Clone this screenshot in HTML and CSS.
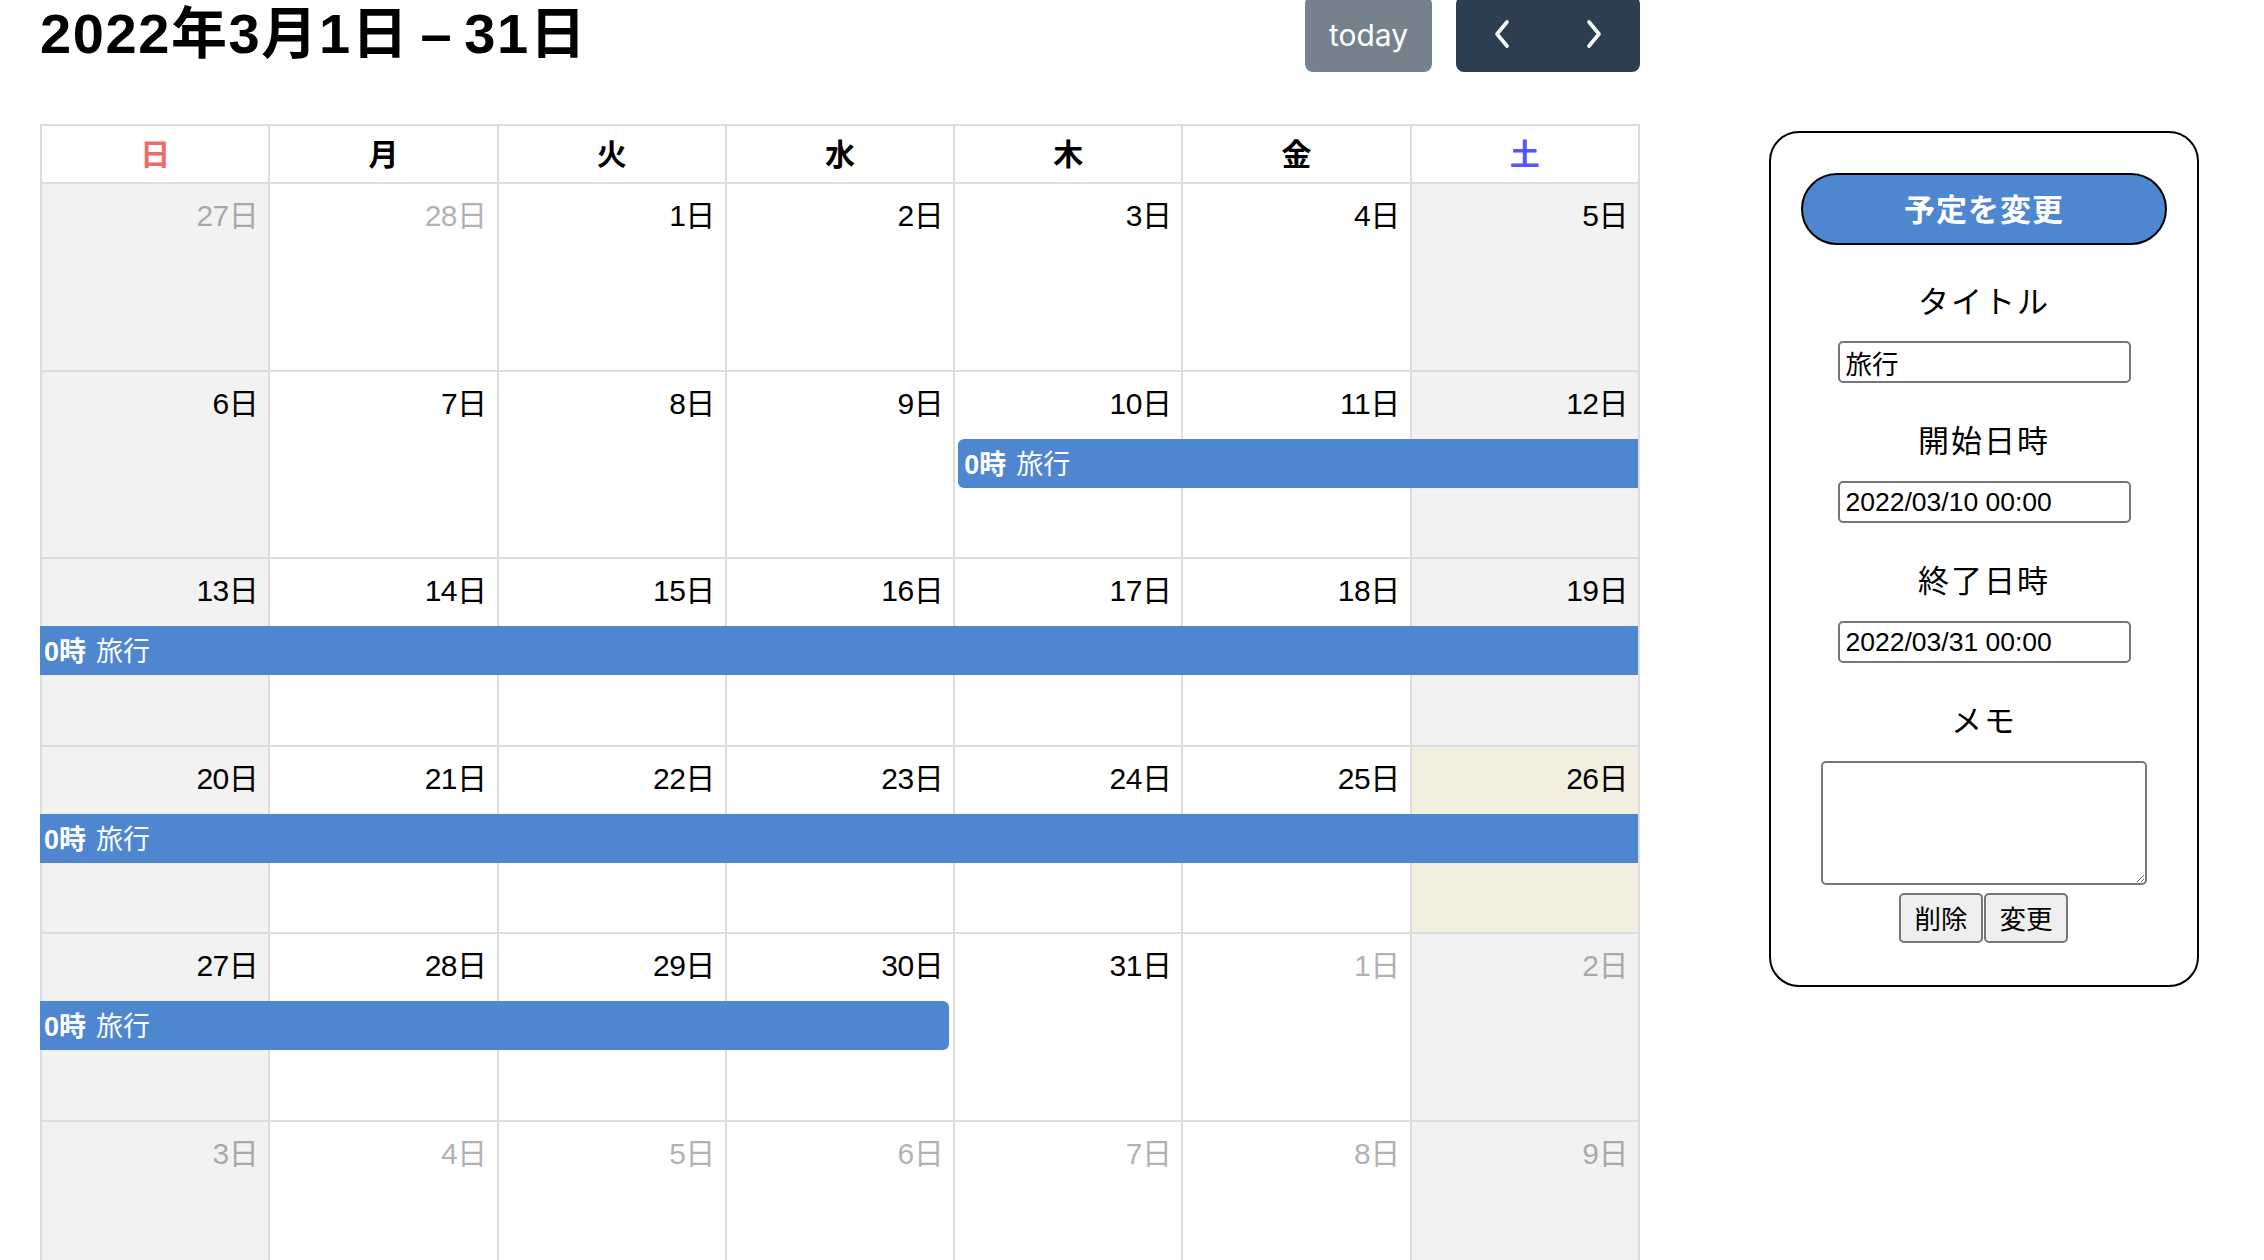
FILE: index.html
```html
<!DOCTYPE html>
<html lang="ja">
<head>
<meta charset="utf-8">
<title>カレンダー</title>
<link rel="stylesheet" href="styles.css">
</head>
<body>
<div class="page">
  <main class="cal">
    <div class="toolbar">
      <h2 class="title">2022年3月1日 – 31日</h2>
      <div class="tools">
        <button class="btn btn-today" type="button">today</button>
        <div class="btn-group">
          <button class="btn btn-icon" type="button" aria-label="prev">
            <svg width="18" height="30" viewBox="0 0 18 30"><polyline points="14,3 4,15 14,27" fill="none" stroke="#fff" stroke-width="3.6" stroke-linecap="round" stroke-linejoin="round"/></svg>
          </button>
          <button class="btn btn-icon" type="button" aria-label="next">
            <svg width="18" height="30" viewBox="0 0 18 30"><polyline points="4,3 14,15 4,27" fill="none" stroke="#fff" stroke-width="3.6" stroke-linecap="round" stroke-linejoin="round"/></svg>
          </button>
        </div>
      </div>
    </div>

    <div class="month">
      <div class="dow-row">
        <div class="dow sun">日</div>
        <div class="dow">月</div>
        <div class="dow">火</div>
        <div class="dow">水</div>
        <div class="dow">木</div>
        <div class="dow">金</div>
        <div class="dow sat">土</div>
      </div>

      <div class="week">
        <div class="day weekend c1"><span class="num other">27日</span></div>
        <div class="day c2"><span class="num other">28日</span></div>
        <div class="day c3"><span class="num">1日</span></div>
        <div class="day c4"><span class="num">2日</span></div>
        <div class="day c5"><span class="num">3日</span></div>
        <div class="day c6"><span class="num">4日</span></div>
        <div class="day weekend c7"><span class="num">5日</span></div>
      </div>

      <div class="week">
        <div class="day weekend c1"><span class="num">6日</span></div>
        <div class="day c2"><span class="num">7日</span></div>
        <div class="day c3"><span class="num">8日</span></div>
        <div class="day c4"><span class="num">9日</span></div>
        <div class="day c5"><span class="num">10日</span></div>
        <div class="day c6"><span class="num">11日</span></div>
        <div class="day weekend c7"><span class="num">12日</span></div>
        <div class="event ev-start span-5-8"><b class="ev-time">0時</b><span>旅行</span></div>
      </div>

      <div class="week">
        <div class="day weekend c1"><span class="num">13日</span></div>
        <div class="day c2"><span class="num">14日</span></div>
        <div class="day c3"><span class="num">15日</span></div>
        <div class="day c4"><span class="num">16日</span></div>
        <div class="day c5"><span class="num">17日</span></div>
        <div class="day c6"><span class="num">18日</span></div>
        <div class="day weekend c7"><span class="num">19日</span></div>
        <div class="event span-1-8"><b class="ev-time">0時</b><span>旅行</span></div>
      </div>

      <div class="week">
        <div class="day weekend c1"><span class="num">20日</span></div>
        <div class="day c2"><span class="num">21日</span></div>
        <div class="day c3"><span class="num">22日</span></div>
        <div class="day c4"><span class="num">23日</span></div>
        <div class="day c5"><span class="num">24日</span></div>
        <div class="day c6"><span class="num">25日</span></div>
        <div class="day today c7"><span class="num">26日</span></div>
        <div class="event span-1-8"><b class="ev-time">0時</b><span>旅行</span></div>
      </div>

      <div class="week">
        <div class="day weekend c1"><span class="num">27日</span></div>
        <div class="day c2"><span class="num">28日</span></div>
        <div class="day c3"><span class="num">29日</span></div>
        <div class="day c4"><span class="num">30日</span></div>
        <div class="day c5"><span class="num">31日</span></div>
        <div class="day c6"><span class="num other">1日</span></div>
        <div class="day weekend c7"><span class="num other">2日</span></div>
        <div class="event ev-end span-1-5"><b class="ev-time">0時</b><span>旅行</span></div>
      </div>

      <div class="week">
        <div class="day weekend c1"><span class="num other">3日</span></div>
        <div class="day c2"><span class="num other">4日</span></div>
        <div class="day c3"><span class="num other">5日</span></div>
        <div class="day c4"><span class="num other">6日</span></div>
        <div class="day c5"><span class="num other">7日</span></div>
        <div class="day c6"><span class="num other">8日</span></div>
        <div class="day weekend c7"><span class="num other">9日</span></div>
      </div>
    </div>
  </main>

  <aside class="panel">
    <div class="panel-head">予定を変更</div>
    <div class="field-label">タイトル</div>
    <input class="field" type="text" value="旅行">
    <div class="field-label">開始日時</div>
    <input class="field" type="text" value="2022/03/10 00:00">
    <div class="field-label">終了日時</div>
    <input class="field" type="text" value="2022/03/31 00:00">
    <div class="field-label">メモ</div>
    <textarea class="memo"></textarea>
    <div class="actions">
      <button class="act" type="button">削除</button><button class="act" type="button">変更</button>
    </div>
  </aside>
</div>
</body>
</html>
```

FILE: styles.css
```css
html, body {
  margin: 0;
  padding: 0;
  overflow: hidden;
  background: #fff;
}

body {
  font-family: "Liberation Sans", "Noto Sans CJK JP", sans-serif;
  color: #000;
}

.page {
  display: flex;
  align-items: flex-start;
  padding-left: 40px;
}

/* ---------- calendar ---------- */
.cal {
  width: 1600px;
  margin-top: -4px;
}

.toolbar {
  display: flex;
  justify-content: space-between;
  align-items: center;
  height: 76px;
  margin-bottom: 52px;
}

.title {
  margin: 0;
  font-size: 56px;
  font-weight: 700;
  letter-spacing: 1.6px;
  word-spacing: -6px;
  line-height: 76px;
  font-family: "Liberation Sans", "Noto Sans CJK JP", sans-serif;
}

.tools {
  display: flex;
  align-items: center;
  gap: 24px;
}

.btn {
  border: 2px solid #2c3e50;
  background: #2c3e50;
  color: #fff;
  height: 76px;
  padding: 0;
  font-family: "Inter", "Liberation Sans", sans-serif;
  cursor: pointer;
}

.btn-today {
  width: 127px;
  font-size: 30px;
  border-radius: 8px;
  opacity: 0.65;
  padding-top: 2px;
}

.btn-group {
  display: flex;
}

.btn-icon {
  width: 92px;
  display: flex;
  align-items: center;
  justify-content: center;
}

.btn-group .btn-icon:first-child {
  border-radius: 8px 0 0 8px;
}

.btn-group .btn-icon:last-child {
  border-radius: 0 8px 8px 0;
}

.month {
  border-top: 2px solid #ddd;
  border-right: 2px solid #ddd;
}

.dow-row {
  display: grid;
  grid-template-columns: repeat(7, 1fr);
}

.dow {
  height: 56px;
  line-height: 52px;
  text-align: center;
  font-size: 30px;
  font-weight: 700;
  border-left: 2px solid #ddd;
  font-family: "Noto Sans CJK JP", sans-serif;
}

.dow.sun { color: #f06b6b; }
.dow.sat { color: #5656ff; }

.week {
  display: grid;
  grid-template-columns: repeat(7, 1fr);
  grid-template-rows: 67px 49px 1fr;
  height: 187.5px;
  box-sizing: border-box;
  border-top: 2px solid #ddd;
}

.day {
  grid-row: 1 / -1;
  border-left: 2px solid #ddd;
  text-align: right;
  padding: 8px 10px 0 0;
  background: #fff;
}

.day.weekend { background: #f2f2f2; }
.day.today { background: #f2efe1; }

.c1 { grid-column: 1; }
.c2 { grid-column: 2; }
.c3 { grid-column: 3; }
.c4 { grid-column: 4; }
.c5 { grid-column: 5; }
.c6 { grid-column: 6; }
.c7 { grid-column: 7; }

.num {
  display: inline-block;
  font-size: 30px;
  line-height: 48px;
  letter-spacing: -0.5px;
}

.num.other { opacity: 0.3; }

.event {
  grid-row: 2;
  align-self: start;
  height: 49px;
  box-sizing: border-box;
  background: #4e87d0;
  color: #fff;
  font-size: 27px;
  line-height: 47px;
  padding: 0 4px;
  white-space: nowrap;
  overflow: hidden;
  font-family: "Noto Sans CJK JP", sans-serif;
  z-index: 1;
}

.ev-time {
  font-weight: 700;
  margin-right: 10px;
  font-family: "Liberation Sans", "Noto Sans CJK JP", sans-serif;
}

.ev-start {
  margin-left: 5px;
  padding-left: 6px;
  border-radius: 6px 0 0 6px;
}

.ev-end {
  margin-right: 4px;
  border-radius: 0 6px 6px 0;
}

.span-5-8 { grid-column: 5 / 8; }
.span-1-8 { grid-column: 1 / 8; }
.span-1-5 { grid-column: 1 / 5; }

/* ---------- side panel ---------- */
.panel {
  width: 430px;
  box-sizing: border-box;
  margin-left: 129px;
  margin-top: 131px;
  border: 2px solid #000;
  border-radius: 30px;
  padding: 40px 30px 42px;
  display: flex;
  flex-direction: column;
  align-items: center;
  font-family: "Noto Sans CJK JP", sans-serif;
}

.panel-head {
  width: 100%;
  height: 72px;
  box-sizing: border-box;
  background: #4e87d0;
  border: 2px solid #000;
  border-radius: 36px;
  color: #fff;
  font-size: 31px;
  font-weight: 700;
  text-align: center;
  line-height: 66px;
  letter-spacing: 1px;
}

.field-label {
  font-size: 31px;
  line-height: 48px;
  margin-top: 32px;
  margin-bottom: 18px;
  letter-spacing: 2px;
}

.panel-head + .field-label {
  margin-top: 31px;
  margin-bottom: 17px;
}

.field {
  width: 293px;
  height: 42px;
  box-sizing: border-box;
  border: 2px solid #767676;
  border-radius: 5px;
  padding: 0 6px;
  font-size: 26.5px;
  font-family: "Liberation Sans", "Noto Sans CJK JP", sans-serif;
  color: #000;
  background: #fff;
  margin: 0;
}

.memo {
  width: 326px;
  height: 124px;
  box-sizing: border-box;
  border: 2px solid #767676;
  border-radius: 5px;
  margin: 0;
  resize: both;
}

.actions {
  display: flex;
  margin-top: 8px;
}

.act {
  width: 84px;
  height: 50px;
  box-sizing: border-box;
  border: 2px solid #767676;
  border-radius: 5px;
  background: #efefef;
  color: #000;
  font-size: 26.5px;
  padding: 0 0 2px;
  font-family: "Noto Sans CJK JP", sans-serif;
  margin-right: 1px;
}
```
